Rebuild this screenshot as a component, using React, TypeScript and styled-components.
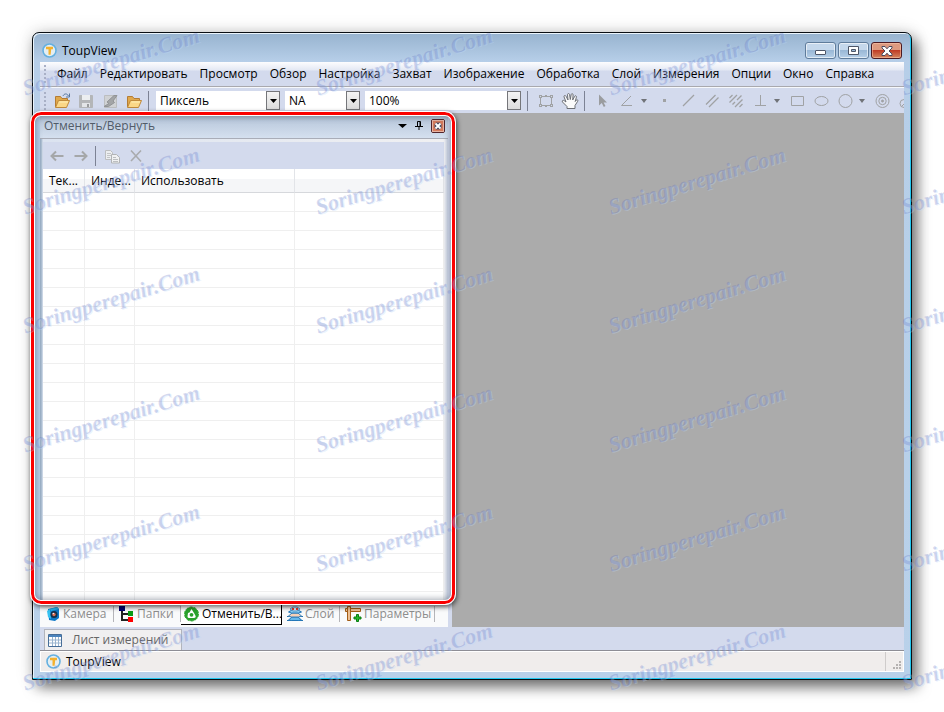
import React from 'react';
import styled, { createGlobalStyle, css } from 'styled-components';

const GlobalStyle = createGlobalStyle`
  *, *::before, *::after { box-sizing: border-box; }
  body {
    margin: 0;
    background: #fff;
    color: #000;
    font: 12px/16px "Open Sans", "Noto Sans", sans-serif;
  }
  button, select { font: inherit; color: inherit; }
  button { border: 0; padding: 0; background: none; }
  svg { display: block; flex: none; }
`;

/* ---------- window chrome ---------- */

const Page = styled.main`
  position: relative;
  display: flex;
  height: 100vh;
  padding: 32px;
  overflow: hidden;
`;

const Window = styled.section`
  flex: 1;
  min-width: 0;
  display: flex;
  flex-direction: column;
  padding: 0 6px 6px;
  border: 1px solid #0a0f14;
  border-radius: 7px 7px 0 0;
  background: linear-gradient(#97b3cf 0, #b6cee8 28px, #b9d1ea 100%);
  box-shadow:
    inset -1px -1px 0 #22c8f0,
    inset 1px 1px 0 #eaf4fc,
    5px 7px 14px rgba(0, 0, 0, 0.55),
    0 0 18px rgba(0, 0, 0, 0.15);
`;

const TitleBar = styled.header`
  flex: none;
  display: flex;
  align-items: center;
  gap: 5px;
  height: 29px;
  padding: 6px 3px 0 3px;
`;

const WindowTitle = styled.h1`
  flex: 1;
  margin: 0;
  font-size: 12px;
  font-weight: 400;
`;

const WindowButtons = styled.div`
  display: flex;
  gap: 2px;
`;

const WindowButton = styled.button<{ $danger?: boolean }>`
  display: flex;
  align-items: center;
  justify-content: center;
  width: 31px;
  height: 17px;
  border: 1px solid #5f7c9b;
  border-radius: 3px;
  background: linear-gradient(#c5d8ec 50%, #9ab8d6 50%, #b5cfe8);
  box-shadow: inset 0 0 0 1px rgba(255, 255, 255, 0.6);
  ${p => p.$danger && css`
    border-color: #4c1a22;
    background: linear-gradient(#dd9a80 50%, #c03d26 50%, #d3855f);
    box-shadow: inset 0 0 0 1px rgba(255, 205, 180, 0.5);
  `}
`;

const Client = styled.div`
  flex: 1;
  min-width: 0;
  min-height: 0;
  display: flex;
  flex-direction: column;
  background: #d3daed;
  margin: 0 1px 1px;
`;

/* ---------- menu and tool bars ---------- */

const Grip = styled.span`
  flex: none;
  width: 2px;
  height: 18px;
  background: repeating-linear-gradient(#a9b0c6 0 2px, transparent 2px 4px);
`;

const MenuBar = styled.nav`
  flex: none;
  display: flex;
  align-items: center;
  height: 25px;
  padding: 0 4px 1px;
  border-bottom: 1px solid #a9a9ae;
  background: linear-gradient(#fdfdfe 0, #e4e9f4 8px, #d3daed 9px);
`;

const MenuList = styled.div`
  display: flex;
  gap: 12px;
  padding-left: 11px;
  white-space: nowrap;
`;

const MenuItem = styled.button`
  flex: none;
`;

const ToolBar = styled.div`
  flex: none;
  display: flex;
  align-items: center;
  height: 26px;
  padding-left: 4px;
  overflow: hidden;
  border-top: 1px solid #f6f8fc;
`;

const ToolGroup = styled.div`
  flex: none;
  display: flex;
  padding-left: 4px;
`;

const ToolButton = styled.button`
  flex: none;
  display: flex;
  align-items: center;
  justify-content: center;
  width: 24px;
  height: 22px;
`;

const DropButton = styled.button`
  flex: none;
  width: 13px;
  padding-left: 2px;
`;

const Divider = styled.span`
  flex: none;
  width: 1px;
  height: 20px;
  margin: 0 2px;
  background: #7c8294;
`;

const Combo = styled.label<{ $width: number }>`
  flex: none;
  display: grid;
  width: ${p => p.$width}px;
  margin-left: 5px;

  > * { grid-area: 1 / 1; }
`;

const ComboSelect = styled.select`
  appearance: none;
  width: 100%;
  height: 19px;
  padding: 0 16px 0 4px;
  border: 0;
  border-radius: 0;
  background: #fff;
`;

const ComboArrow = styled.span`
  display: flex;
  align-items: center;
  justify-content: center;
  justify-self: end;
  width: 14px;
  height: 19px;
  border: 1px solid #75767a;
  background: linear-gradient(#f4f4f4, #dcdcdc);
  pointer-events: none;
`;

/* ---------- workspace ---------- */

const Workspace = styled.div`
  flex: 1;
  min-height: 0;
  display: flex;
  background: #ababab;
`;

const Dock = styled.aside`
  position: relative;
  flex: 0 0 412px;
  display: flex;
  flex-direction: column;
  min-height: 0;
  padding-right: 4px;
  background: #d3daed;
`;

const DockTitle = styled.div`
  flex: none;
  display: flex;
  align-items: center;
  height: 26px;
  padding: 0 3px 0 4px;
  border-bottom: 1px solid #a9adb8;
  background: linear-gradient(#a7b6c8 0, #bccbde 8px, #d5e0ef 100%);
`;

const DockHeading = styled.h2`
  flex: 1;
  margin: 0;
  font-size: 12px;
  font-weight: 400;
  color: #525c69;
`;

const DockActions = styled.div`
  display: flex;
  align-items: center;
  gap: 8px;
`;

const DockBody = styled.div`
  flex: 1;
  min-height: 0;
  display: flex;
  flex-direction: column;
  padding: 3px 4px 3px 3px;
  background: linear-gradient(90deg, #9fb3c9 0 1px, #dbe3f0 3px, #f0f0f2 99%, #c9d2e4);
  overflow: hidden;
`;

const HistoryTools = styled.div`
  flex: none;
  display: flex;
  align-items: center;
  height: 27px;
  padding-left: 2px;
  background: #d3daed;
`;

const HistoryGroup = styled.div`
  display: flex;
  padding-left: 2px;
`;

const TableArea = styled.div`
  flex: 1;
  min-height: 0;
  overflow: hidden;
  background: #fff;
`;

const Table = styled.table`
  width: 100%;
  table-layout: fixed;
  border-collapse: separate;
  border-spacing: 0;

  th {
    height: 24px;
    padding: 0 6px;
    border-right: 1px solid #e2e4e8;
    border-bottom: 1px solid #d6d8dc;
    background: linear-gradient(#fff 10px, #f5f6f8 10px);
    font-weight: 400;
    text-align: left;
    white-space: nowrap;
    overflow: hidden;
  }
  td {
    height: 19px;
    padding: 0;
    border-right: 1px solid #efefef;
    border-bottom: 1px solid #efefef;
  }
`;

const Col = styled.col<{ $width?: number }>`
  width: ${p => (p.$width ? `${p.$width}px` : 'auto')};
`;

const DockTabs = styled.div`
  flex: none;
  display: flex;
  align-items: flex-start;
  height: 24px;
  background: linear-gradient(#d0d2d5, #f9fafb 6px);
`;

const DockTab = styled.button<{ $active?: boolean; $width: number }>`
  flex: none;
  display: flex;
  align-items: center;
  gap: 2px;
  width: ${p => p.$width}px;
  height: 22px;
  padding-left: 5px;
  color: #8d8d8d;
  white-space: nowrap;
  background: linear-gradient(90deg, #b5b5b9, #b5b5b9) right center / 1px 16px no-repeat;
  ${p => p.$active && css`
    padding-left: 2px;
    color: #000;
    background: #fff;
    border-right: 1px solid #000;
    border-bottom: 1px solid #000;
  `}
`;

const Highlight = styled.div`
  position: absolute;
  inset: -2px -4px 22px -10px;
  border: 1px solid #fff;
  border-radius: 11px;
  box-shadow:
    inset 0 0 0 3px #fa0000,
    inset 0 0 0 4px #fff,
    inset 0 0 6px 5px rgba(50, 65, 85, 0.45),
    1px 2px 5px rgba(0, 0, 0, 0.6);
  pointer-events: none;
`;

/* ---------- bottom bars ---------- */

const SheetBar = styled.div`
  flex: none;
  display: flex;
  align-items: flex-end;
  height: 24px;
  padding-left: 4px;
  border-bottom: 1px solid #8e8e96;
`;

const SheetTab = styled.button`
  display: flex;
  align-items: center;
  gap: 10px;
  width: 138px;
  height: 21px;
  padding-left: 3px;
  border: 1px solid #b2b4bc;
  border-bottom: 0;
  background: #f0eff0;
  color: #666;
  white-space: nowrap;
`;

const StatusBar = styled.footer`
  flex: none;
  display: flex;
  align-items: center;
  gap: 5px;
  height: 21px;
  padding-left: 5px;
  border: 1px solid #fff;
  background: #f0edec;
`;

const StatusText = styled.span`
  flex: 1;
`;

const StatusGrip = styled.span`
  display: flex;
  align-items: flex-end;
  justify-content: flex-end;
  width: 18px;
  height: 19px;
  padding: 1px;
  border-left: 1px solid #cfcccb;
`;

/* ---------- watermark ---------- */

const Watermark = styled.div`
  position: absolute;
  inset: 2px 0 0 -36px;
  display: grid;
  grid-template-columns: repeat(4, 293px);
  grid-auto-rows: 119px;
  place-items: center;
  overflow: hidden;
  pointer-events: none;
  user-select: none;
`;

const Mark = styled.span`
  transform: rotate(-17deg);
  font: italic bold 22px/24px "Liberation Serif", serif;
  color: rgba(88, 108, 190, 0.25);
  text-shadow: 1px 1px 0 rgba(190, 215, 250, 0.3);
`;

/* ---------- drawings ---------- */

const Logo = () => (
  <svg width="15" height="15" viewBox="0 0 15 15">
    <circle cx="7.5" cy="7.5" r="6.5" fill="#e4eef2" stroke="#64b0e0" strokeWidth="1.6" />
    <path d="M4 3.7h7v2.5H9.2l-.6 5.6H6.5V6.2H4z" fill="#f4b12d" />
  </svg>
);

const Down = ({ w = 7, color = '#000' }: { w?: number; color?: string }) => (
  <svg width={w} height="4" viewBox="0 0 8 4" preserveAspectRatio="none">
    <path d="M0 0h8L4 4z" fill={color} />
  </svg>
);

const G = '#a0a2a4';

const Icon = ({ children, size = 18 }: { children: React.ReactNode; size?: number }) => (
  <svg width={size} height={size} viewBox="0 0 18 18" fill="none" stroke={G}>
    {children}
  </svg>
);

const folder = (
  <>
    <path d="M2.5 15V4.5h5l1.5 2h5.5v3" fill="#e0a84c" stroke="#b47c34" />
    <path d="M2.5 15.5l3-7h11l-3 7z" fill="#fbd786" stroke="#c08a3c" />
    <path d="M6.5 10h8.5" stroke="#fff0b8" />
  </>
);

const OpenIcon = () => (
  <Icon>
    {folder}
    <path d="M10 4c1-2.500 4-3 5.500 0M16.500 1.500v3.500h-3.500" stroke="#5878a0" />
  </Icon>
);
const FolderIcon = () => <Icon>{folder}</Icon>;
const SaveIcon = () => (
  <Icon>
    <path d="M2.500 3.500h13v12h-13z" fill="#b4b6b8" stroke="#b4b6b8" />
    <path d="M5 3h8v5H5z" fill="#eceef0" stroke="none" />
    <path d="M5 11h8v4H5z" fill="#e3e5e7" stroke="none" />
    <path d="M10 12h2v3h-2z" fill="#999b9d" stroke="none" />
  </Icon>
);
const AcquireIcon = () => (
  <Icon>
    <path d="M3.500 3.500v12h12v-12z" fill="#d0d2d4" stroke="#bcbec0" />
    <path d="M3 14.500l5-3-2-1.500 7-6.500h3L12 9l1.500 1.500-6 4z" fill="#a3a5a7" stroke="#929496" />
  </Icon>
);
const RegionIcon = () => (
  <Icon>
    <path d="M3.500 4.500h11v9h-11z" />
    <path d="M2 3h3v3H2zM13 3h3v3h-3zM2 12h3v3H2zM13 12h3v3h-3zM8 3h2v2H8zM8 13h2v2H8z" fill={G} stroke="none" />
    <path d="M3 4h1v1H3zM14 4h1v1h-1zM3 13h1v1H3zM14 13h1v1h-1z" fill="#d3daed" stroke="none" />
  </Icon>
);
const HandIcon = () => (
  <Icon>
    <path
      d="M6 16.500v-2L1.500 10c-.8-1.300.6-2.200 1.700-1.300L5 10 3 4.800C2.700 3.400 4.400 3 5 4.200L7 8 6.500 2.700C6.500 1.200 8.400 1.200 8.600 2.600L9.300 7.500l.9-5c.3-1.300 2-1 1.900.4L11.700 8l2-3.700c.7-1.100 2.100-.4 1.700.9l-1.200 4.300 1-1.300c.9-1 2.200-.2 1.500 1.100L14 13.500v3z"
      fill="#fafafa"
      stroke="#6b6e74"
    />
  </Icon>
);
const PointerIcon = () => (
  <Icon>
    <path d="M5 2.500v11l2.800-2.500 2 4 1.700-.9-1.900-3.600H13z" fill="#9a9c9f" stroke="none" />
  </Icon>
);
const AngleIcon = () => <Icon><path d="M13 4L3.500 13.500H14" /></Icon>;
const PointIcon = () => <Icon><path d="M8 7h3v3H8z" fill={G} stroke="none" /></Icon>;
const LineIcon = () => <Icon><path d="M4 14L15 3" strokeWidth="1.300" /></Icon>;
const ParallelIcon = () => <Icon><path d="M3 12.500L12.500 3M6 15L15.500 5.500" strokeWidth="1.300" /></Icon>;
const TripleIcon = () => (
  <Icon>
    <path
      d="M2.500 6L5.500 3M2.500 10.500L10 3M5.500 12.500L8 10M10 8l4.500-4.500M8 15l7.500-7.500M12.500 15l3-3"
      strokeWidth="1.300"
    />
  </Icon>
);
const PerpIcon = () => <Icon><path d="M9.500 3v10.500M4 13.500h11" /></Icon>;
const RectIcon = () => <Icon><path d="M3.500 4.500h12v9h-12z" /></Icon>;
const EllipseIcon = () => <Icon><ellipse cx="9.500" cy="9" rx="6.500" ry="4.500" /></Icon>;
const CircleIcon = () => <Icon><circle cx="9.500" cy="9" r="6.500" /></Icon>;
const RingsIcon = () => (
  <Icon>
    <circle cx="9.500" cy="9" r="6.500" />
    <circle cx="9.500" cy="9" r="3.700" />
    <circle cx="9.500" cy="9" r="1" fill={G} />
  </Icon>
);
const PairIcon = () => (
  <Icon>
    <circle cx="7" cy="11.500" r="4" />
    <path d="M5 14l8-8" />
    <circle cx="14" cy="7" r="3" />
  </Icon>
);
const BackIcon = () => <Icon><path d="M15.500 9H4M8 4.500L3.500 9 8 13.500" stroke="#a5a7a9" strokeWidth="2" /></Icon>;
const ForwardIcon = () => <Icon><path d="M2.500 9H14M10 4.500L14.500 9 10 13.500" stroke="#a5a7a9" strokeWidth="2" /></Icon>;
const CopyIcon = () => (
  <Icon>
    <path d="M2.500 3.500h5l2 2v7h-7z" fill="#eceef0" stroke="#bcbec0" />
    <path d="M4 6.500h4M4 8.500h4M4 10.500h3" stroke="#c3c5c7" />
    <path d="M8.500 7.500h5l3 3v5.500h-8z" fill="#f0f1f2" stroke="#b2b4b6" />
    <path d="M10 10.500h3M10 12.500h5M10 14.500h5" stroke="#bcbec0" />
  </Icon>
);
const DeleteIcon = () => <Icon><path d="M4 3.500l10 11M14 3.500L4 14" stroke="#a9abad" strokeWidth="1.600" /></Icon>;

const PinIcon = () => (
  <svg width="8" height="9" viewBox="0 0 8 9" fill="none" stroke="#000">
    <path d="M2.500 5V.5h3V5M5 1v4M0 5.500h8M4 6v3" />
  </svg>
);
const DockCloseIcon = () => (
  <svg width="14" height="14" viewBox="0 0 14 14">
    <rect x=".5" y=".5" width="13" height="13" rx="1.500" fill="#d67a5c" stroke="#51252c" />
    <rect x="1.500" y="1.500" width="11" height="11" fill="none" stroke="#e6b4a4" />
    <path d="M4.500 4.500l5 5M9.500 4.500l-5 5" stroke="#454a62" strokeWidth="4" />
    <path d="M4.500 4.500l5 5M9.500 4.500l-5 5" stroke="#fff" strokeWidth="1.800" />
  </svg>
);
const MinimizeGlyph = () => (
  <svg width="11" height="11" viewBox="0 0 11 11">
    <rect x=".5" y="5.500" width="10" height="4" rx=".5" fill="#fff" stroke="#4d5668" />
  </svg>
);
const MaximizeGlyph = () => (
  <svg width="11" height="9" viewBox="0 0 11 9">
    <path d="M.5.5h10v8H.5zM3.500 3.500h4v2h-4z" fill="#fff" fillRule="evenodd" stroke="#4d5668" />
  </svg>
);
const CloseGlyph = () => (
  <svg width="12" height="10" viewBox="0 0 12 10">
    <path d="M1 .5h3l2 2.300L8 .5h3v1.500L8 5l3 3v1.500H8L6 7.200 4 9.500H1V8l3-3-3-3z" fill="#fff" stroke="#4c4a5c" />
  </svg>
);

const CameraIcon = () => (
  <svg width="16" height="16" viewBox="0 0 16 16">
    <path d="M3 3l9-2 2 2v9l-4 3-6-1z" fill="#0c78c8" />
    <path d="M2 5l3-2 1 10-3-2z" fill="#35c2f2" />
    <path d="M5 3l7-2 2 2-8 2z" fill="#28b3ea" />
    <circle cx="9" cy="8.500" r="3.500" fill="#16304c" />
    <circle cx="9" cy="8.500" r="1.700" fill="#dd7055" />
    <circle cx="8.300" cy="7.500" r=".8" fill="#eef" />
  </svg>
);
const TreeIcon = () => (
  <svg width="16" height="16" viewBox="0 0 16 16">
    <path d="M3 4v10h8M3 8h8" fill="none" stroke="#222" strokeWidth="2" />
    <path d="M0 0h6v5H0z" fill="#00006e" />
    <path d="M9 5h5v5H9z" fill="#0a9a14" />
    <path d="M9 11h5v5H9z" fill="#f00" />
  </svg>
);
const UndoIcon = () => (
  <svg width="17" height="16" viewBox="0 0 17 16">
    <circle cx="8.500" cy="8" r="7" fill="#2aa12c" />
    <circle cx="8.500" cy="8" r="7" fill="none" stroke="#35ac35" strokeDasharray="3 1.400" />
    <path d="M4.500 10.500c0 1 1 1.500 2 1.500h4.500c1.200 0 2-.8 1.600-2L11.300 7.500 8.500 3 6.500 6.500 5 7z" fill="#fff" />
    <circle cx="8.500" cy="8.800" r="1.900" fill="#2aa12c" />
  </svg>
);
const LayersIcon = () => (
  <svg width="16" height="16" viewBox="0 0 16 16" fill="none">
    <path d="M0 14.500h5M11 14.500h5M0 10.500h4M12 10.500h4" stroke="#2874b0" />
    <path d="M1.500 14l3.500-3h6l3.500 3-3 .500H4.500z" fill="#67b8ea" stroke="#2276b8" />
    <path d="M1.500 10l3.500-3h6l3.500 3-3 1H4.500z" fill="#f6d0b8" stroke="#3780b8" />
    <path d="M1.500 6l3.500-2h6l3.500 2-3 1H4.500z" fill="#8ed0f4" stroke="#2276b8" />
    <path d="M3 3l3-2h4l3 2-3 2H6z" fill="#dfeefa" stroke="#5599cc" />
    <path d="M5 2h2v2H5zM9 2h2v2H9z" fill="#e23c2a" />
  </svg>
);
const ParamsIcon = () => (
  <svg width="17" height="16" viewBox="0 0 17 16">
    <path d="M.5 2.500h15v3H.5z" fill="#edc093" stroke="#a35d16" />
    <path d="M2.500.5h3v14h-3z" fill="#edc093" stroke="#a35d16" />
    <path d="M11.500 8.500h2v2.500h2.500v2h-2.500v2.500h-2V13H9v-2h2.500z" fill="#24b82c" stroke="#087d10" />
  </svg>
);
const SheetIcon = () => (
  <svg width="14" height="13" viewBox="0 0 14 13">
    <path d="M.5.5h13v12H.5z" fill="#fff" stroke="#486e98" />
    <path d="M1 1h12v2H1z" fill="#4c84bd" />
    <path d="M1 6h12M1 9h12M4.500 3v9M7.500 3v9M10.500 3v9" stroke="#9ab4cf" />
  </svg>
);
const ResizeGrip = () => (
  <svg width="9" height="9" viewBox="0 0 9 9" fill="#b5b2b1">
    <path d="M6 0h2v2H6zM3 3h2v2H3zM6 3h2v2H6zM0 6h2v2H0zM3 6h2v2H3zM6 6h2v2H6z" />
  </svg>
);

/* ---------- data ---------- */

const menus = [
  'Файл', 'Редактировать', 'Просмотр', 'Обзор', 'Настройка', 'Захват', 'Изображение',
  'Обработка', 'Слой', 'Измерения', 'Опции', 'Окно', 'Справка',
];

const drawTools: { name: string; icon: React.ReactNode; drop?: boolean }[] = [
  { name: 'Указатель', icon: <PointerIcon /> },
  { name: 'Угол', icon: <AngleIcon />, drop: true },
  { name: 'Точка', icon: <PointIcon /> },
  { name: 'Линия', icon: <LineIcon /> },
  { name: 'Параллели', icon: <ParallelIcon /> },
  { name: 'Две параллели', icon: <TripleIcon /> },
  { name: 'Перпендикуляр', icon: <PerpIcon />, drop: true },
  { name: 'Прямоугольник', icon: <RectIcon /> },
  { name: 'Эллипс', icon: <EllipseIcon /> },
  { name: 'Круг', icon: <CircleIcon />, drop: true },
  { name: 'Кольцо', icon: <RingsIcon /> },
  { name: 'Два круга', icon: <PairIcon /> },
];

const dockTabs = [
  { name: 'Камера', icon: <CameraIcon />, width: 74 },
  { name: 'Папки', icon: <TreeIcon />, width: 67 },
  { name: 'Отменить/В...', icon: <UndoIcon />, width: 101, active: true },
  { name: 'Слой', icon: <LayersIcon />, width: 58 },
  { name: 'Параметры', icon: <ParamsIcon />, width: 95 },
];

function ComboBox({ label, value, width }: { label: string; value: string; width: number }) {
  return (
    <Combo $width={width}>
      <ComboSelect aria-label={label} defaultValue={value}>
        <option>{value}</option>
      </ComboSelect>
      <ComboArrow><Down /></ComboArrow>
    </Combo>
  );
}

export default function App() {
  return (
    <Page>
      <GlobalStyle />
      <Window>
        <TitleBar>
          <Logo />
          <WindowTitle>ToupView</WindowTitle>
          <WindowButtons>
            <WindowButton aria-label="Свернуть"><MinimizeGlyph /></WindowButton>
            <WindowButton aria-label="Развернуть"><MaximizeGlyph /></WindowButton>
            <WindowButton aria-label="Закрыть" $danger><CloseGlyph /></WindowButton>
          </WindowButtons>
        </TitleBar>

        <Client>
          <MenuBar>
            <Grip />
            <MenuList>
              {menus.map(m => <MenuItem key={m}>{m}</MenuItem>)}
            </MenuList>
          </MenuBar>

          <ToolBar>
            <Grip />
            <ToolGroup>
              <ToolButton aria-label="Открыть"><OpenIcon /></ToolButton>
              <ToolButton aria-label="Сохранить"><SaveIcon /></ToolButton>
              <ToolButton aria-label="Получить"><AcquireIcon /></ToolButton>
              <ToolButton aria-label="Папка"><FolderIcon /></ToolButton>
            </ToolGroup>
            <Divider />
            <ComboBox label="Единица" value="Пиксель" width={124} />
            <ComboBox label="Объектив" value="NA" width={75} />
            <ComboBox label="Масштаб" value="100%" width={156} />
            <ToolGroup><Divider /></ToolGroup>
            <ToolGroup>
              <ToolButton aria-label="Область"><RegionIcon /></ToolButton>
              <ToolButton aria-label="Перемещение"><HandIcon /></ToolButton>
            </ToolGroup>
            <Divider />
            <ToolGroup>
              {drawTools.map(t => (
                <React.Fragment key={t.name}>
                  <ToolButton aria-label={t.name}>{t.icon}</ToolButton>
                  {t.drop && (
                    <DropButton aria-label={`${t.name}: варианты`}><Down w={6} color="#707378" /></DropButton>
                  )}
                </React.Fragment>
              ))}
            </ToolGroup>
          </ToolBar>

          <Workspace>
            <Dock>
              <DockTitle>
                <DockHeading>Отменить/Вернуть</DockHeading>
                <DockActions>
                  <button aria-label="Меню панели"><Down w={9} /></button>
                  <button aria-label="Закрепить"><PinIcon /></button>
                  <button aria-label="Закрыть панель"><DockCloseIcon /></button>
                </DockActions>
              </DockTitle>
              <DockBody>
                <HistoryTools>
                  <ToolButton aria-label="Отменить"><BackIcon /></ToolButton>
                  <ToolButton aria-label="Вернуть"><ForwardIcon /></ToolButton>
                  <Divider />
                  <HistoryGroup>
                    <ToolButton aria-label="Копировать"><CopyIcon /></ToolButton>
                    <ToolButton aria-label="Удалить"><DeleteIcon /></ToolButton>
                  </HistoryGroup>
                </HistoryTools>
                <TableArea>
                  <Table>
                    <colgroup>
                      <Col $width={42} />
                      <Col $width={50} />
                      <Col $width={160} />
                      <Col />
                    </colgroup>
                    <thead>
                      <tr><th>Тек...</th><th>Инде...</th><th>Использовать</th><th /></tr>
                    </thead>
                    <tbody>
                      {Array.from({ length: 60 }, (_, i) => (
                        <tr key={i}><td /><td /><td /><td /></tr>
                      ))}
                    </tbody>
                  </Table>
                </TableArea>
              </DockBody>
              <DockTabs>
                {dockTabs.map(t => (
                  <DockTab key={t.name} $width={t.width} $active={t.active}>
                    {t.icon}
                    {t.name}
                  </DockTab>
                ))}
              </DockTabs>
              <Highlight />
            </Dock>
          </Workspace>

          <SheetBar>
            <SheetTab><SheetIcon />Лист измерений</SheetTab>
          </SheetBar>
          <StatusBar>
            <Logo />
            <StatusText>ToupView</StatusText>
            <StatusGrip><ResizeGrip /></StatusGrip>
          </StatusBar>
        </Client>
      </Window>

      <Watermark aria-hidden="true">
        {Array.from({ length: 24 }, (_, i) => <Mark key={i}>Soringperepair.Com</Mark>)}
      </Watermark>
    </Page>
  );
}
